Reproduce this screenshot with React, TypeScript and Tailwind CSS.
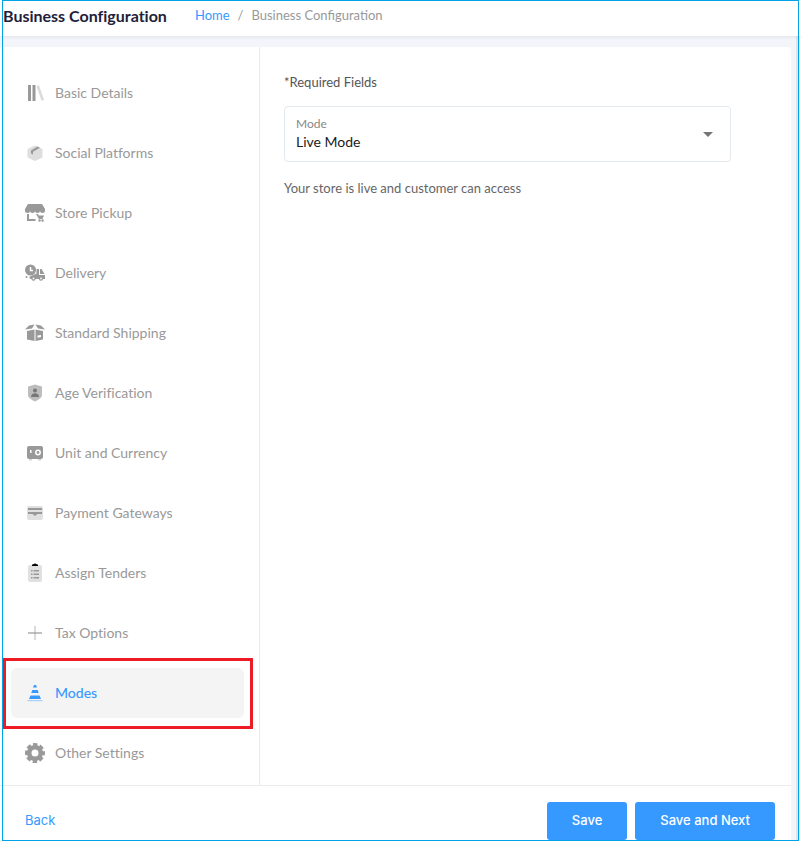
import { useState } from "react";
import type { ReactNode } from "react";

interface MenuItem {
  label: string;
  icon: ReactNode;
}

const menuItems: MenuItem[] = [
  {
    label: "Basic Details",
    icon: (
      <>
        <path d="M3 2h3v16H3zM7.500 2h3v16h-3z" />
        <path d="M11.500 3l2.500-.8L19 17l-2.500.8z" opacity=".35" />
      </>
    ),
  },
  {
    label: "Social Platforms",
    icon: (
      <>
        <path d="M10 2.500l6.500 3a1.500 1.500 0 0 1 1 1.500v6.500a1.500 1.500 0 0 1-1 1.500L10 18l-6.500-3a1.500 1.500 0 0 1-1-1.500V7a1.500 1.500 0 0 1 1-1.500z" opacity=".32" />
        <path d="M6 10.500V7.500l6.500-4 2.500 1.200-7 4v2.800z" />
      </>
    ),
  },
  {
    label: "Store Pickup",
    icon: (
      <>
        <path d="M3 1h14l3 5v1.500a2.500 2.500 0 0 1-5 0 2.500 2.500 0 0 1-5 0 2.500 2.500 0 0 1-5 0 2.500 2.500 0 0 1-5 0V6z" />
        <path d="M2 11h2v5h6.500v2H2zM11 11h2l.7 1.500H19L17.500 16H14z" />
        <circle cx="14.500" cy="17.500" r="1.200" />
        <circle cx="17.500" cy="17.500" r="1.200" />
      </>
    ),
  },
  {
    label: "Delivery",
    icon: (
      <>
        <circle cx="5.500" cy="7" r="5.500" />
        <path d="M5.500 4v3.500H8" fill="none" stroke="#fff" strokeWidth="1.500" />
        <path d="M4 14l7.500-3.500V6H14v6h6v4H5.500zM15 6h1.500l3 5H15z" />
        <circle cx="1.500" cy="14" r="1" />
        <circle cx="8.500" cy="15.500" r="2.200" />
        <circle cx="16" cy="15.500" r="2.200" />
        <g fill="#fff">
          <circle cx="8.500" cy="15.500" r=".9" />
          <circle cx="16" cy="15.500" r=".9" />
        </g>
      </>
    ),
  },
  {
    label: "Standard Shipping",
    icon: (
      <>
        <path d="M0 6.500l4-4 5.500-1L7 5.500zM20 6.500l-4-4-5.500-1L13 5.500zM2 8l7.500-1.500V18L2 16.500z" />
        <path d="M10.500 6.500L18 8v8.500L10.500 18z" />
        <path d="M12.500 12.500l3.500-.5v2l-3.500.7z" fill="#fff" />
      </>
    ),
  },
  {
    label: "Age Verification",
    icon: (
      <>
        <path d="M10 1.500l7 2V12c0 3-4 5-7 6.500C7 17 3 15 3 12V3.500z" opacity=".65" />
        <g fill="#777">
          <circle cx="10" cy="7.500" r="2" />
          <path d="M6 14c0-5 8-5 8 0z" />
        </g>
      </>
    ),
  },
  {
    label: "Unit and Currency",
    icon: (
      <>
        <path d="M4 3h12a2 2 0 0 1 2 2v9a2 2 0 0 1-2 2H4a2 2 0 0 1-2-2V5a2 2 0 0 1 2-2z" />
        <path d="M4 16h3v1.500H4zM13 16h3v1.500h-3z" opacity=".4" />
        <circle cx="13" cy="9.500" r="2.200" fill="none" stroke="#fff" strokeWidth="1.500" />
        <path d="M5 7h1.500v3H5z" fill="#fff" />
      </>
    ),
  },
  {
    label: "Payment Gateways",
    icon: (
      <>
        <rect x="2" y="3" width="16" height="14" rx="2" opacity=".3" />
        <path d="M3 5h14v2H3zM3 9h14v2h-4.500L10 13l-2.500-2H3z" />
      </>
    ),
  },
  {
    label: "Assign Tenders",
    icon: (
      <>
        <rect x="3" y="2" width="14" height="17" rx="2" opacity=".3" />
        <path d="M8 1.500Q10-.5 12 1.500h1V3H7V1.500z" fill="#000" />
        <path d="M6 7h1.500v1.500H6zM8.500 7H14v1.500H8.500zM6 10.500h1.500V12H6zM8.500 10.500H14V12H8.500zM6 14h1.500v1.500H6zM8.500 14H14v1.500H8.500z" />
      </>
    ),
  },
  {
    label: "Tax Options",
    icon: (
      <>
        <path d="M3 9h14v2H3z" opacity=".6" />
        <path d="M9 3h2v14H9z" opacity=".35" />
      </>
    ),
  },
  {
    label: "Modes",
    icon: (
      <>
        <path d="M9 2h2l1 2.500H8zM7.300 7h5.400l1 3H6.300zM5.500 12.500h9L16 16H4z" />
        <path d="M2.500 17h15v1.200h-15z" opacity=".4" />
      </>
    ),
  },
  {
    label: "Other Settings",
    icon: (
      <>
        <circle cx="10" cy="10" r="5.800" fill="none" stroke="currentColor" strokeWidth="4.600" />
        <circle cx="10" cy="10" r="8.600" fill="none" stroke="currentColor" strokeWidth="2.800" strokeDasharray="4.400 2.354" strokeDashoffset="2.200" />
      </>
    ),
  },
];

function SideMenu({ active, onSelect }: { active: string; onSelect: (label: string) => void }) {
  return (
    <nav className="flex w-[260px] shrink-0 flex-col gap-2.5 border-r border-[#ebebeb] pt-[21px] pb-[7px] pl-[11px] pr-[15px] [font-variant-ligatures:none]">
      {menuItems.map(({ label, icon }) => (
        <button
          key={label}
          type="button"
          onClick={() => onSelect(label)}
          className={`flex h-[50px] items-center gap-2.5 rounded-md px-3.5 text-left text-[14px] ${
            label === active ? "bg-[#f4f4f4] font-medium text-[#3699ff]" : "text-[#999]"
          }`}
        >
          <svg viewBox="0 0 20 20" className="size-5 shrink-0" fill="currentColor" aria-hidden="true">
            {icon}
          </svg>
          <span className="pb-0.5">{label}</span>
        </button>
      ))}
    </nav>
  );
}

export default function App() {
  const [active, setActive] = useState("Modes");

  return (
    <div className="relative bg-white pb-0.5 font-['Lato',sans-serif]">
      {/* Header */}
      <header className="relative flex h-9 items-center gap-7 bg-white pb-1 pl-[3px] shadow-[0_1px_4px_rgba(0,0,0,0.08)]">
        <h1 className="text-[16px] leading-6 font-bold text-[#1e2139] [font-variant-ligatures:none]">Business Configuration</h1>
        <nav className="flex gap-2 text-[13px] text-[#999]" aria-label="Breadcrumb">
          <a href="#" className="text-[#3699ff]">Home</a>
          <span>/</span>
          <span>Business Configuration</span>
        </nav>
      </header>

      {/* Content */}
      <div className="mr-0.5 border-r-4 border-[#e3e4e8] bg-[#f4f5fa] pt-[11px] pr-[5px]">
        <div className="rounded-t bg-white">
          <div className="flex">
            <SideMenu active={active} onSelect={setActive} />

            <main className="flex-1 pt-[25px] pr-[60px] pl-6">
              <p className="text-[13px] leading-5 text-[#555]">*Required Fields</p>
              <div className="relative mt-3.5">
                <label htmlFor="mode" className="absolute top-2.5 left-3 text-[12px] leading-4 text-[#888]">
                  Mode
                </label>
                <select
                  id="mode"
                  className="h-14 w-full appearance-none rounded border border-[#e4e9ee] bg-white pt-3.5 pl-[11px] text-[14px] text-[#212121]"
                >
                  <option>Live Mode</option>
                  <option>Maintenance Mode</option>
                </select>
                <svg viewBox="0 0 10 5" className="pointer-events-none absolute top-[26px] right-[18px] h-[5px] w-2.5" fill="#757575" aria-hidden="true">
                  <path d="M0 0h10L5 5z" />
                </svg>
              </div>
              <p className="mt-4 text-[13px] leading-5 text-[#666]">Your store is live and customer can access</p>
            </main>
          </div>

          {/* Footer actions */}
          <footer className="flex h-14 items-start gap-2 border-t border-[#ebebeb] pt-4 pr-4 pl-[25px] font-['Inter',sans-serif] text-[13px]">
            <button type="button" className="mr-auto h-[38px] text-[#3699ff]">Back</button>
            <button type="button" className="h-[38px] rounded-[3px] bg-[#3699ff] px-[25px] font-medium text-white">Save</button>
            <button type="button" className="h-[38px] rounded-[3px] bg-[#3699ff] px-[25px] font-medium text-white">Save and Next</button>
          </footer>
        </div>
      </div>

      {/* Outline round the page and the marked entry */}
      <div className="pointer-events-none absolute top-0 right-[3px] bottom-0.5 left-0.5 border border-[#00a2e8]" />
      <div className="pointer-events-none absolute top-[658px] left-[3px] h-[71px] w-[250px] border-[3px] border-[#ed1c24]" />
    </div>
  );
}
